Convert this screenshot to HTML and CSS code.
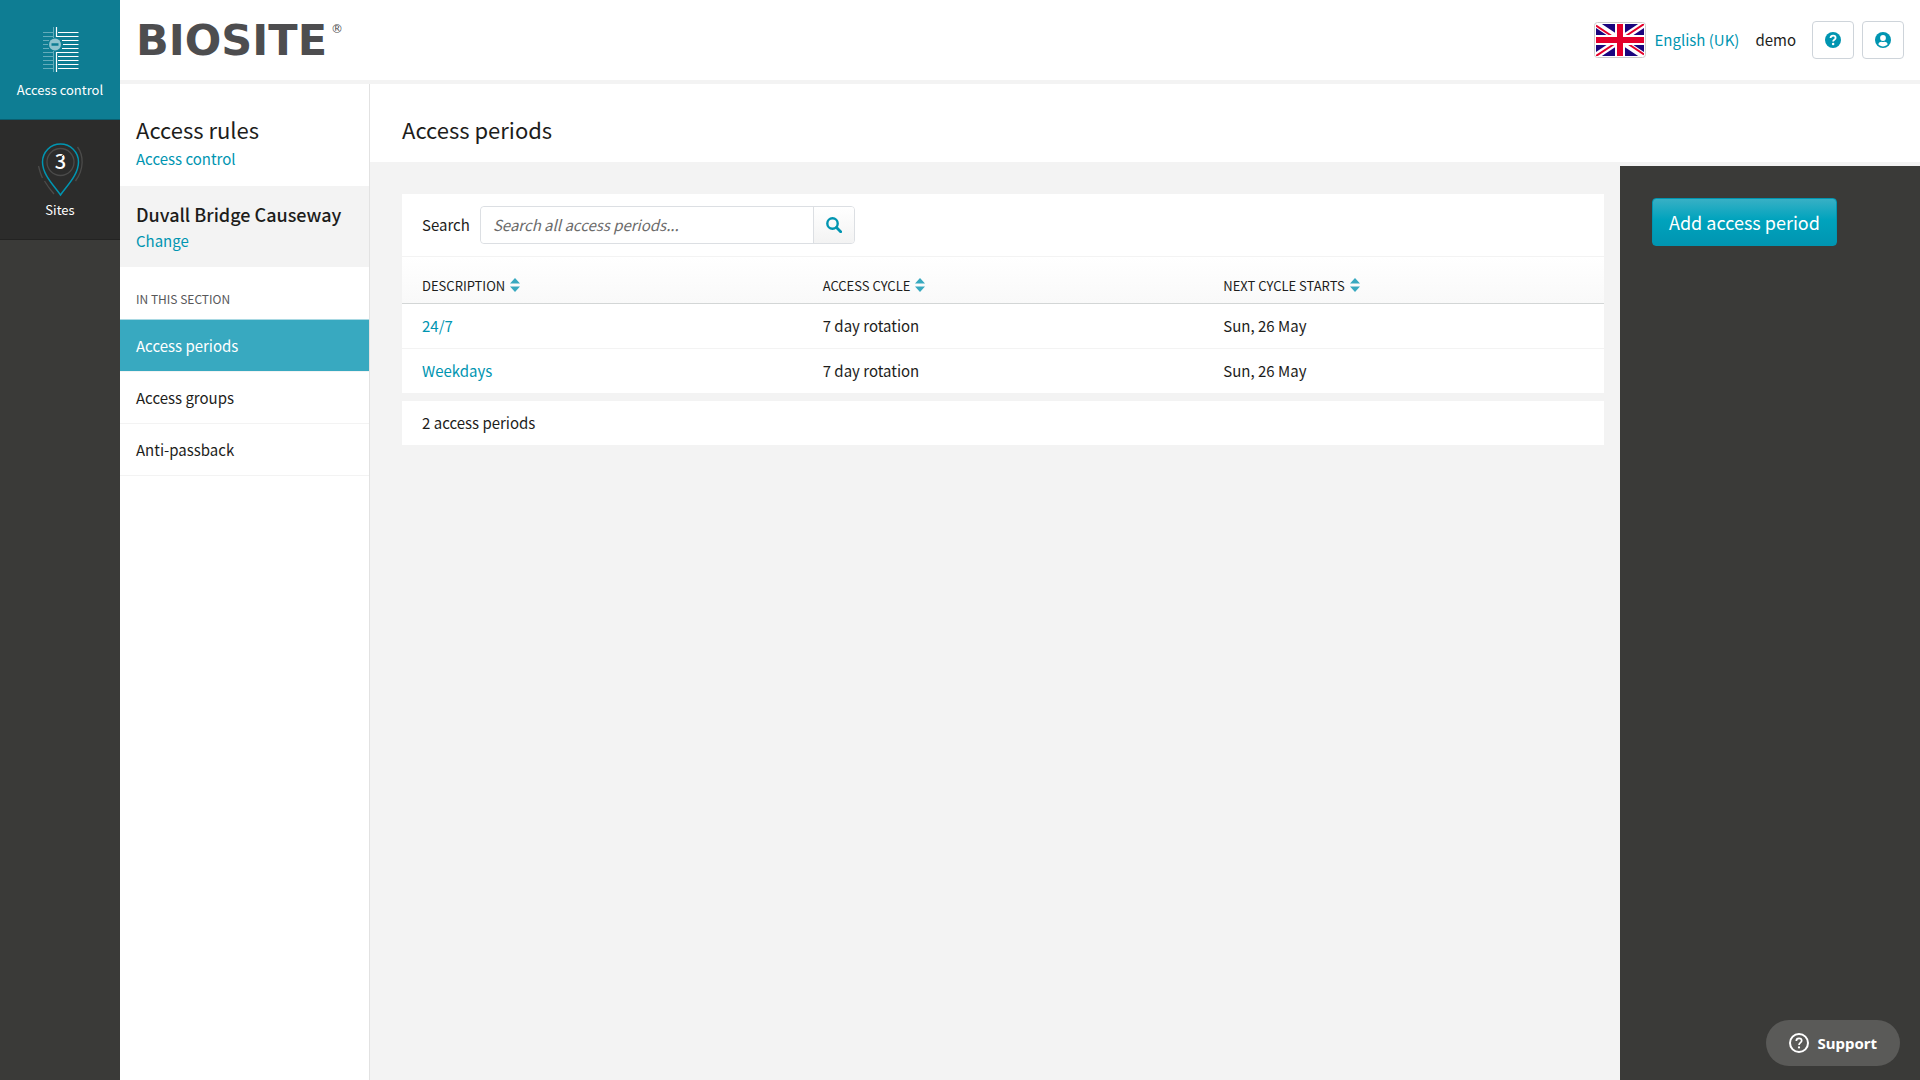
FILE: index.html
```html
<!DOCTYPE html>
<html lang="en">
<head>
    <meta charset="UTF-8">
    <meta name="viewport" content="width=device-width, initial-scale=1.0">
    <title>Access periods</title>
    <link rel="stylesheet" href="styles.css">
</head>
<body>
    <nav class="app-nav">
        <a href="#" class="app-link active">
            <svg class="app-icon" width="40" height="48" viewBox="0 0 40 48" fill="none">
                <path d="M3 6.500h10M3 10.500h10M3 14.500h6M3 18.500h5M3 22.500h6M3 26.500h10M3 30.500h10M3 34.500h10M3 38.500h10M3 42.500h10M13.500 1v11M13.500 25v21" stroke="#64acbb" stroke-width="1"/>
                <path d="M16.500 1v9.500h22M18 6.500h20.500M22 14.500h16.500M23 18.500h15.500M22 22.500h16.500M38.500 26.500h-22V46M18 30.500h20.500M18 34.500h20.500M18 38.500h20.500M18 42.500h20.500" stroke="#fff" stroke-width="1.200"/>
                <circle cx="15" cy="18.500" r="6" fill="#8fc3ce"/>
                <path d="M11.500 18.500h7" stroke="#0e7d93" stroke-width="2.500"/>
            </svg>
            <span>Access control</span>
        </a>
        <a href="#" class="app-link">
            <svg class="app-icon pin" width="48" height="56" viewBox="0 0 48 56" fill="none">
                <path d="M24.500 53C18.500 44 6.500 33 6.500 20a18 18 0 0 1 36 0C42.500 33 30.500 44 24.500 53z" stroke="#0095b1" stroke-width="1.500"/>
                <circle cx="24.500" cy="20" r="13.500" stroke="#4b4b4a" stroke-width="1.300"/>
                <path d="M41.500 5c6 8 7 22-2 34M2.500 24c1 4 2 8 4 12M8.500 39c3 5 6 9 9.500 13" stroke="#4b4b4a" stroke-width="1.300"/>
                <text x="24.500" y="27" text-anchor="middle" class="pin-count">3</text>
                <path d="M21 18l7-6" stroke="#2c2c2b"/>
            </svg>
            <span>Sites</span>
        </a>
    </nav>

    <div class="page">
        <header class="top-bar">
            <a href="#" class="logo">BIOSITE<sup>®</sup></a>
            <div class="top-tools">
                <a href="#" class="language">
                    <svg class="flag" width="52" height="36" viewBox="0 0 52 36">
                        <rect x="0.500" y="0.500" width="51" height="35" rx="3" fill="#fff" stroke="#ccc"/>
                        <svg x="2" y="2" width="48" height="32" viewBox="0 0 48 32">
                            <path d="M0 0h48v32H0z" fill="#1b057f"/>
                            <path d="M0 0l48 32M48 0L0 32" stroke="#fff" stroke-width="6.500"/>
                            <path d="M0 1.500L21 15.500M27 16.500L48 30.500M48 0L26 14.500M22 17.500L0 32" stroke="#e4002b" stroke-width="2"/>
                            <path d="M24 0v32M0 16h48" stroke="#fff" stroke-width="10"/>
                            <path d="M24 0v32M0 16h48" stroke="#e4002b" stroke-width="6"/>
                        </svg>
                    </svg>
                    English (UK)
                </a>
                <span class="user-name">demo</span>
                <button type="button" class="icon-btn" aria-label="Help">
                    <svg width="16" height="16" viewBox="0 0 16 16">
                        <circle cx="8" cy="8" r="8" fill="#0095b1"/>
                        <path d="M5.500 6C5.700 4.400 6.800 3.700 8.100 3.700c1.400 0 2.500.9 2.500 2.200 0 1.800-2.500 1.800-2.500 3.500" fill="none" stroke="#fff" stroke-width="1.800"/>
                        <circle cx="8.100" cy="11.900" r="1.250" fill="#fff"/>
                    </svg>
                </button>
                <button type="button" class="icon-btn" aria-label="Account">
                    <svg width="16" height="16" viewBox="0 0 16 16">
                        <circle cx="8" cy="8" r="8" fill="#0095b1"/>
                        <circle cx="8" cy="6" r="2.900" fill="#fff"/>
                        <path d="M3.300 12.200c.6-1.700 1.800-2.400 3.200-2.400.9.400 2.100.4 3 0 1.400 0 2.600.7 3.200 2.400C11.500 13.600 9.800 14.400 8 14.400s-3.500-.8-4.700-2.200z" fill="#fff"/>
                    </svg>
                </button>
            </div>
        </header>

        <div class="content">
            <aside class="side-panel">
                <div class="side-head">
                    <h2>Access rules</h2>
                    <a href="#">Access control</a>
                </div>
                <div class="site-box">
                    <h3>Duvall Bridge Causeway</h3>
                    <a href="#">Change</a>
                </div>
                <h4 class="section-label">In this section</h4>
                <nav class="section-nav">
                    <a href="#" class="active">Access periods</a>
                    <a href="#">Access groups</a>
                    <a href="#">Anti-passback</a>
                </nav>
            </aside>

            <div class="main-area">
                <div class="page-head">
                    <h1>Access periods</h1>
                </div>
                <div class="main-cols">
                    <main class="listing">
                        <form class="search-bar">
                            <label for="search">Search</label>
                            <div class="search-group">
                                <input type="text" id="search" placeholder="Search all access periods...">
                                <button type="submit" aria-label="Search">
                                    <svg width="16" height="16" viewBox="0 0 16 16" fill="none" stroke="#0095b1">
                                        <circle cx="6.500" cy="6.500" r="5.200" stroke-width="2.400"/>
                                        <path d="M10.500 10.500l4.200 4.200" stroke-width="2.800" stroke-linecap="round"/>
                                    </svg>
                                </button>
                            </div>
                        </form>
                        <table class="periods">
                            <thead>
                                <tr>
                                    <th>Description <svg class="sort" width="10" height="14" viewBox="0 0 10 14"><path d="M0 5.500L5 0l5 5.500zM0 8.500h10L5 14z"/></svg></th>
                                    <th>Access cycle <svg class="sort" width="10" height="14" viewBox="0 0 10 14"><path d="M0 5.500L5 0l5 5.500zM0 8.500h10L5 14z"/></svg></th>
                                    <th>Next cycle starts <svg class="sort" width="10" height="14" viewBox="0 0 10 14"><path d="M0 5.500L5 0l5 5.500zM0 8.500h10L5 14z"/></svg></th>
                                </tr>
                            </thead>
                            <tbody>
                                <tr>
                                    <td><a href="#">24/7</a></td>
                                    <td>7 day rotation</td>
                                    <td>Sun, 26 May</td>
                                </tr>
                                <tr>
                                    <td><a href="#">Weekdays</a></td>
                                    <td>7 day rotation</td>
                                    <td>Sun, 26 May</td>
                                </tr>
                            </tbody>
                        </table>
                        <p class="summary">2 access periods</p>
                    </main>
                    <aside class="actions">
                        <button type="button" class="add-btn">Add access period</button>
                    </aside>
                </div>
            </div>
        </div>
    </div>

    <button type="button" class="support">
        <svg width="20" height="20" viewBox="0 0 20 20" fill="none" stroke="#fff">
            <circle cx="10" cy="10" r="9" stroke-width="2"/>
            <path d="M7.300 7.900c0-1.500 1.100-2.500 2.700-2.500s2.700 1 2.700 2.300c0 1.900-2.700 2-2.700 4.300" stroke-width="1.700"/>
            <circle cx="10" cy="14.400" r="1.100" fill="#fff" stroke="none"/>
        </svg>
        Support
    </button>
</body>
</html>
```

FILE: styles.css
```css
* {
    margin: 0;
    padding: 0;
    box-sizing: border-box;
}

body {
    display: flex;
    min-height: 100vh;
    font-family: "Noto Sans CJK SC", "Open Sans", sans-serif;
    font-size: 15px;
    line-height: 20px;
    color: #1d1d1b;
    background: #f3f3f3;
}

a {
    color: #0095b1;
    text-decoration: none;
}

button,
input {
    font: inherit;
}

button {
    cursor: pointer;
}

/* far left application bar */
.app-nav {
    flex: 0 0 120px;
    background: #3a3a38;
}

.app-link {
    display: flex;
    flex-direction: column;
    align-items: center;
    justify-content: flex-end;
    height: 120px;
    padding-bottom: 19px;
    background: #2c2c2b;
    border-bottom: 1px solid #232322;
    color: #fff;
    font-size: 13px;
}

.app-link.active {
    background: #0e7d93;
    border-color: #0a5e6f;
}

.app-icon {
    margin-bottom: 6px;
}

.app-icon.pin {
    margin-bottom: 2px;
}

.pin-count {
    font-size: 20px;
    font-weight: 500;
    fill: #fff;
}

.page {
    flex: 1;
    display: flex;
    flex-direction: column;
}

.top-bar {
    display: flex;
    align-items: center;
    justify-content: space-between;
    height: 84px;
    padding: 0 16px;
    background: #fff;
    border-bottom: 4px solid #f3f3f3;
}

.logo {
    display: flex;
    align-items: flex-start;
    color: #4d4d4f;
    font-family: "DejaVu Sans", sans-serif;
    font-size: 43px;
    font-weight: bold;
    line-height: 46px;
}

.logo sup {
    font-size: 12px;
    font-weight: normal;
    line-height: 16px;
    padding: 4px 0 0 4px;
}

.top-tools {
    display: flex;
    align-items: center;
}

.language {
    display: flex;
    align-items: center;
    gap: 8px;
}

.user-name {
    margin: 0 8px 0 16px;
}

.icon-btn {
    display: flex;
    align-items: center;
    justify-content: center;
    width: 42px;
    height: 38px;
    margin-left: 8px;
    background: #fff;
    border: 1px solid #ced4da;
    border-radius: 4px;
}

.content {
    flex: 1;
    display: flex;
}

/* section panel */
.side-panel {
    flex: 0 0 250px;
    background: #fff;
    border-right: 1px solid #e2e2e2;
}

.side-head {
    height: 102px;
    padding: 29px 16px 0;
}

h1,
h2 {
    font-size: 22px;
    font-weight: normal;
    line-height: 32px;
}

.side-head a {
    display: block;
    line-height: 28px;
}

.site-box {
    height: 81px;
    padding: 15px 16px 0;
    background: #f3f3f3;
}

h3 {
    font-size: 18px;
    font-weight: 500;
    line-height: 26px;
}

.site-box a {
    display: block;
    line-height: 28px;
}

.section-label {
    padding: 22px 16px 10px;
    color: #58585a;
    font-size: 12px;
    font-weight: normal;
    text-transform: uppercase;
}

.section-nav a {
    display: block;
    height: 52px;
    padding: 16px;
    border-top: 1px solid #f3f3f3;
    color: #1d1d1b;
}

.section-nav a:last-child {
    height: 53px;
    border-bottom: 1px solid #f3f3f3;
}

.section-nav a.active {
    background: #38a9c0;
    border-color: #a9d9e3;
    color: #fff;
}

.main-area {
    flex: 1;
    display: flex;
    flex-direction: column;
}

.page-head {
    height: 82px;
    padding: 29px 32px 0;
    background: #fff;
    border-bottom: 4px solid #f3f3f3;
}

.main-cols {
    flex: 1;
    display: flex;
}

.listing {
    flex: 1;
    padding: 28px 16px 28px 32px;
}

.search-bar {
    display: flex;
    align-items: center;
    gap: 10px;
    padding: 12px 20px;
    background: #fff;
    border-bottom: 1px solid #f3f3f3;
}

.search-group {
    display: flex;
    width: 375px;
    height: 38px;
    border: 1px solid #dcdfe3;
    border-radius: 4px;
}

.search-group input {
    flex: 1;
    min-width: 0;
    padding: 0 12px;
    border: 0;
    border-radius: 4px 0 0 4px;
    background: #fff;
}

.search-group input::placeholder {
    color: #6b6b6b;
    font-style: italic;
}

.search-group button {
    display: flex;
    align-items: center;
    justify-content: center;
    width: 41px;
    border: 0;
    border-left: 1px solid #dcdfe3;
    border-radius: 0 3px 3px 0;
    background: linear-gradient(#fff, #f3f3f3);
}

.periods {
    width: 100%;
    table-layout: fixed;
    border-spacing: 0;
    background: #fff;
}

.periods th {
    height: 47px;
    padding: 12px 20px 0;
    border-bottom: 1px solid #d3d6d6;
    background: linear-gradient(#fff, #f9f9f9);
    font-size: 13px;
    font-weight: normal;
    text-align: left;
    text-transform: uppercase;
}

.sort {
    margin-left: 2px;
    fill: #38a9c0;
    vertical-align: -1px;
}

.periods td {
    height: 45px;
    padding: 0 20px;
    border-bottom: 1px solid #f3f3f3;
}

.summary {
    margin-top: 7px;
    padding: 12px 20px;
    background: #fff;
}

.actions {
    flex: 0 0 300px;
    padding: 32px;
    background: #3a3a38;
}

.add-btn {
    height: 48px;
    padding: 0 16px;
    border: 1px solid #0095b1;
    border-radius: 4px;
    background: linear-gradient(#38b0c5, #00a3bd 45%, #0095b1);
    color: #fff;
    font-size: 18px;
}

/* floating help launcher */
.support {
    position: fixed;
    right: 20px;
    bottom: 14px;
    display: flex;
    align-items: center;
    gap: 8px;
    height: 46px;
    padding: 0 23px;
    border: 0;
    border-radius: 23px;
    background: #5a5a58;
    color: #fff;
    font-family: "Noto Sans", sans-serif;
    font-size: 15px;
    font-weight: bold;
}
```
